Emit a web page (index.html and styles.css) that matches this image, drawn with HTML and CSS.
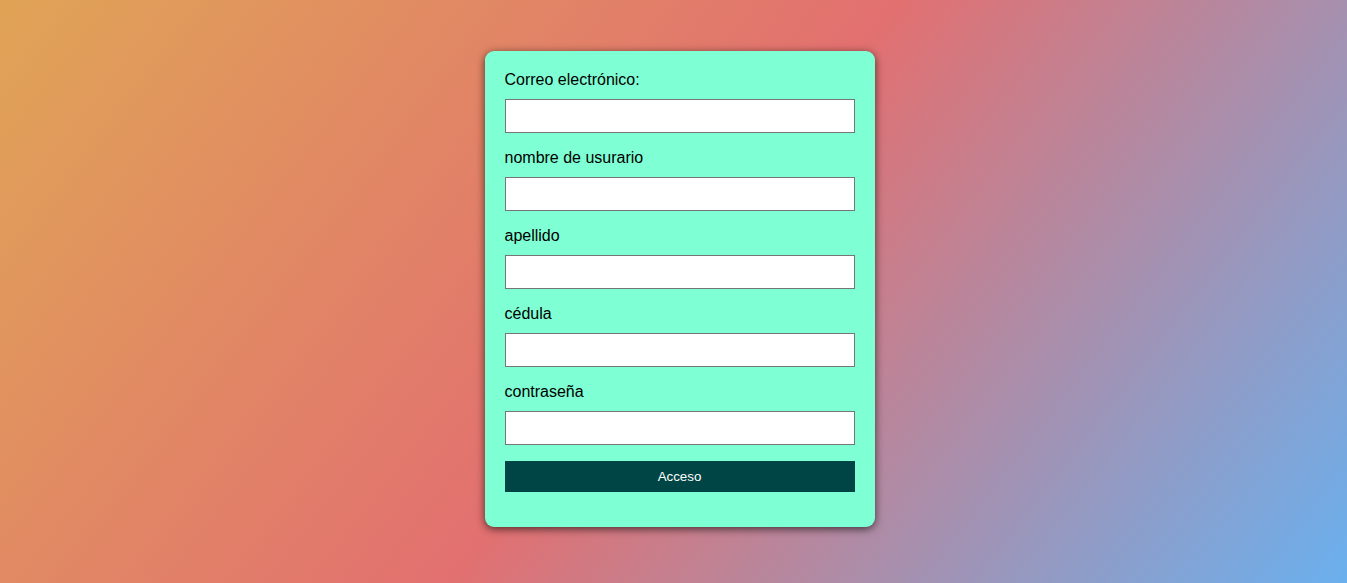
FILE: index.html
```html
<!DOCTYPE html>
<html lang="es">
<head>
<meta charset="utf-8">
<title>Registro</title>
<link rel="stylesheet" href="styles.css">
</head>
<body>
<main class="page">
  <form class="card">
    <label class="label" for="email">Correo electrónico:</label>
    <input class="field" id="email" type="email">
    <label class="label" for="user">nombre de usurario</label>
    <input class="field" id="user" type="text">
    <label class="label" for="last">apellido</label>
    <input class="field" id="last" type="text">
    <label class="label" for="ced">cédula</label>
    <input class="field" id="ced" type="text">
    <label class="label" for="pass">contraseña</label>
    <input class="field" id="pass" type="password">
    <button class="btn" type="button">Acceso</button>
  </form>
</main>
</body>
</html>
```

FILE: styles.css
```css
html, body {
  margin: 0;
  height: 100%;
}
body {
  background: linear-gradient(127.7deg, #e0a456 0%, #e27070 50%, #6ab0ee 100%);
  font-family: "Liberation Sans", Arial, sans-serif;
}
.page {
  display: flex;
  justify-content: center;
  align-items: flex-start;
  padding: 51px 0 0 12px;
}
.card {
  width: 350px;
  padding: 20px 20px 35px;
  background: #7fffd4;
  border-radius: 9px;
  box-shadow: 0 2px 8px rgba(0, 0, 0, 0.65);
  display: flex;
  flex-direction: column;
}
.label {
  display: block;
  font-size: 16px;
  line-height: 18px;
  color: #000;
  margin-bottom: 10px;
}
.field {
  box-sizing: border-box;
  width: 100%;
  height: 34px;
  margin: 0 0 16px;
  border: 1px solid #767676;
  border-radius: 0;
  background: #fff;
  padding: 0 4px;
  font-size: 16px;
}
.btn {
  height: 31px;
  width: 100%;
  border: none;
  background: #004545;
  color: #fff;
  font-family: "Liberation Sans", Arial, sans-serif;
  font-size: 13.33px;
  padding: 0;
  margin: 0;
}
```
